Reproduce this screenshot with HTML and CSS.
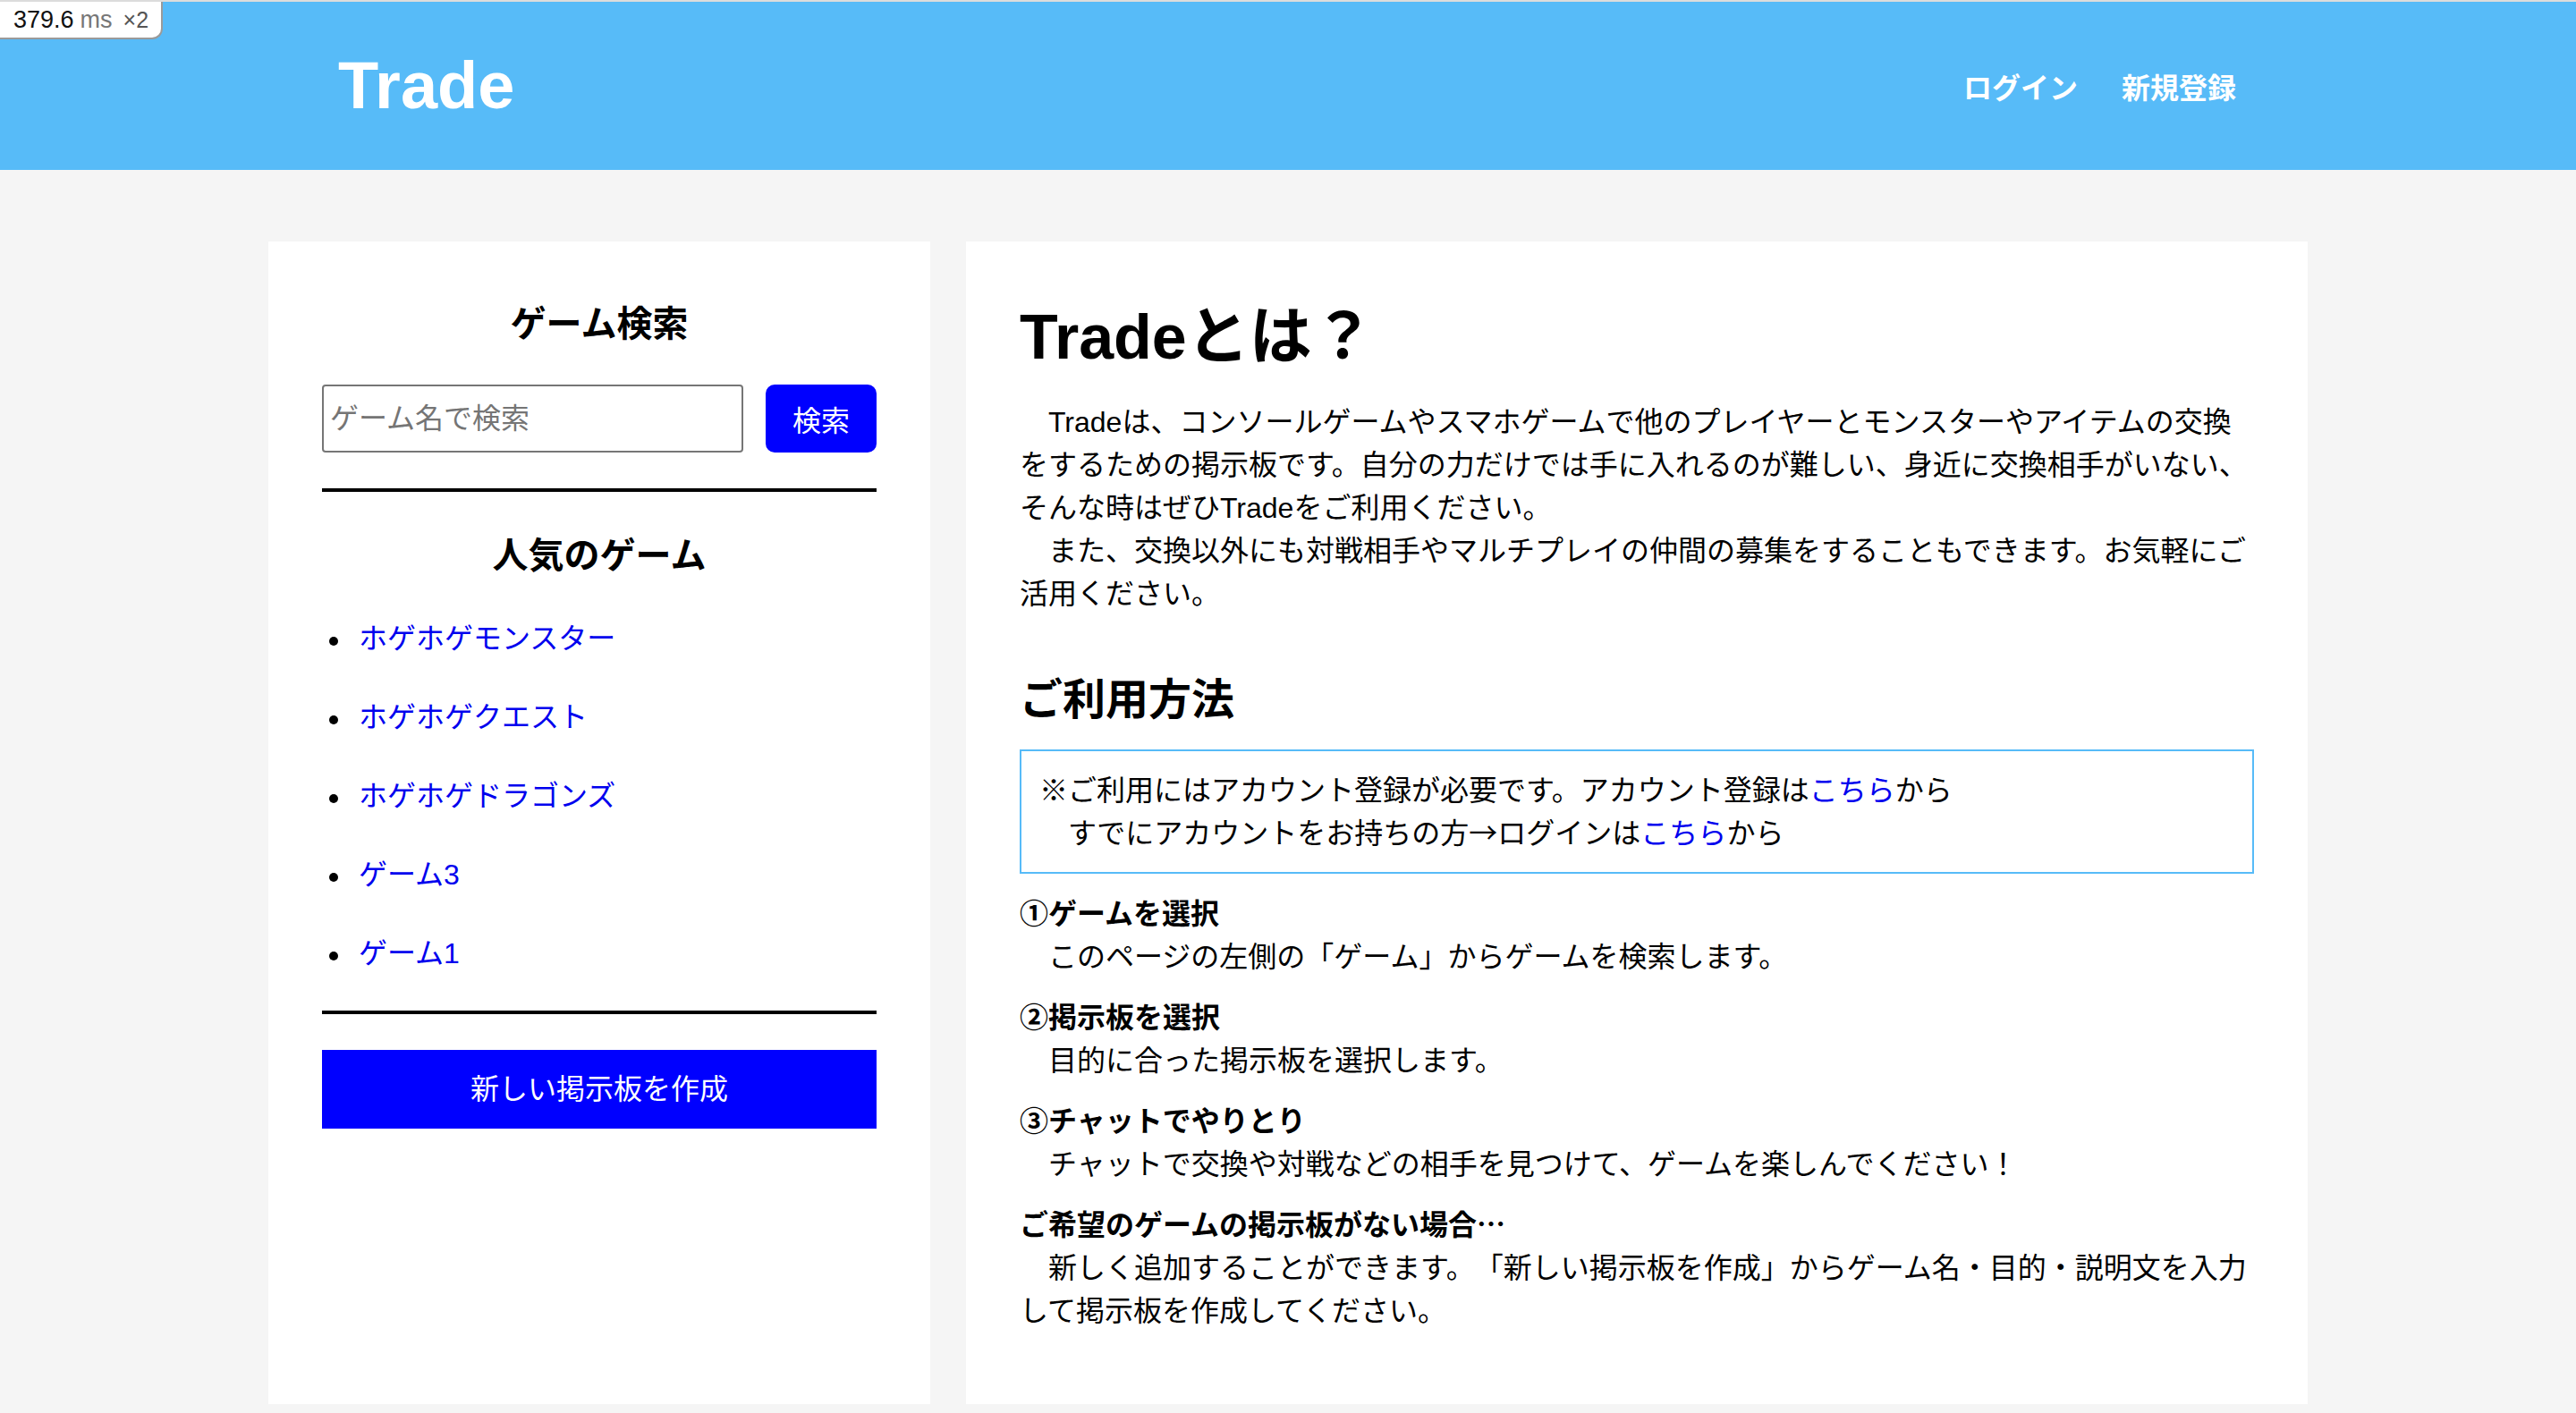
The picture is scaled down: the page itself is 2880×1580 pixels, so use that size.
FILE: index.html
```html
<!DOCTYPE html>
<html lang="ja">
<head>
<meta charset="utf-8">
<title>Trade</title>
<link rel="stylesheet" href="styles.css">
</head>
<body>
<div class="perf-badge"><span class="pb-num">379.6</span><span class="pb-unit">ms</span><span class="pb-mult">×2</span></div>
<header class="site-header">
  <div class="header-inner">
    <a class="logo" href="#">Trade</a>
    <nav class="header-nav">
      <a href="#">ログイン</a>
      <a href="#">新規登録</a>
    </nav>
  </div>
</header>
<main class="layout">
  <aside class="card sidebar">
    <h2 class="side-title">ゲーム検索</h2>
    <form class="search-row" onsubmit="return false;">
      <input class="search-input" type="text" placeholder="ゲーム名で検索">
      <button class="search-btn" type="submit">検索</button>
    </form>
    <hr class="divider">
    <h2 class="side-title popular-title">人気のゲーム</h2>
    <ul class="game-list">
      <li><a href="#">ホゲホゲモンスター</a></li>
      <li><a href="#">ホゲホゲクエスト</a></li>
      <li><a href="#">ホゲホゲドラゴンズ</a></li>
      <li><a href="#">ゲーム3</a></li>
      <li><a href="#">ゲーム1</a></li>
    </ul>
    <hr class="divider divider-tight">
    <a class="create-btn" href="#">新しい掲示板を作成</a>
  </aside>
  <section class="card content">
    <h1 class="page-title">Tradeとは？</h1>
    <p class="intro">　Tradeは、コンソールゲームやスマホゲームで他のプレイヤーとモンスターやアイテムの交換をするための掲示板です。自分の力だけでは手に入れるのが難しい、身近に交換相手がいない、そんな時はぜひTradeをご利用ください。<br>　また、交換以外にも対戦相手やマルチプレイの仲間の募集をすることもできます。お気軽にご活用ください。</p>
    <h2 class="section-title">ご利用方法</h2>
    <div class="notice">
      ※ご利用にはアカウント登録が必要です。アカウント登録は<a href="#">こちら</a>から<br>
      　すでにアカウントをお持ちの方<span class="jp">→</span>ログインは<a href="#">こちら</a>から
    </div>
    <div class="step step-first">
      <p class="step-title">①ゲームを選択</p>
      <p class="step-desc">　このページの左側の「ゲーム」からゲームを検索します。</p>
    </div>
    <div class="step">
      <p class="step-title">②掲示板を選択</p>
      <p class="step-desc">　目的に合った掲示板を選択します。</p>
    </div>
    <div class="step">
      <p class="step-title">③チャットでやりとり</p>
      <p class="step-desc">　チャットで交換や対戦などの相手を見つけて、ゲームを楽しんでください！</p>
    </div>
    <div class="step">
      <p class="step-title">ご希望のゲームの掲示板がない場合<span class="jp">…</span></p>
      <p class="step-desc">　新しく追加することができます。「新しい掲示板を作成」からゲーム名・目的・説明文を入力して掲示板を作成してください。</p>
    </div>
  </section>
</main>
</body>
</html>
```

FILE: styles.css
```css
html, body {
  margin: 0;
  padding: 0;
}

body {
  background: #f5f5f5;
  font-family: "Liberation Sans", "Noto Sans CJK JP", sans-serif;
  font-size: 32px;
  line-height: 48px;
  color: #000;
  text-spacing-trim: space-all;
}

.jp {
  font-family: "Noto Sans CJK JP", sans-serif;
  line-height: 1;
}

/* perf badge overlay */
.perf-badge {
  position: absolute;
  top: 2px;
  left: 0;
  width: 182px;
  height: 42px;
  box-sizing: border-box;
  background: #fff;
  border-right: 2px solid #9a9a9a;
  border-bottom: 2px solid #9a9a9a;
  border-bottom-right-radius: 12px;
  display: flex;
  align-items: center;
  padding-left: 15px;
  font-family: "Liberation Sans", sans-serif;
  font-size: 27px;
  line-height: 1;
  z-index: 10;
}

.pb-num {
  color: #111;
}

.pb-unit {
  color: #777;
  margin-left: 7px;
}

.pb-mult {
  color: #555;
  margin-left: 12px;
  font-size: 25px;
}

/* header */
.site-header {
  background: #57bbf8;
  border-top: 2px solid #dcdcdc;
  height: 188px;
}

.header-inner {
  width: 2124px;
  height: 100%;
  margin: 0 auto;
  display: flex;
  align-items: center;
  justify-content: space-between;
}

.logo {
  color: #fff;
  text-decoration: none;
  font-size: 74px;
  font-weight: 700;
  line-height: 1;
}

.header-nav {
  display: flex;
  gap: 49px;
  padding-right: 2px;
}

.header-nav a {
  color: #fff;
  text-decoration: none;
  font-family: "Noto Sans CJK JP", sans-serif;
  font-weight: 700;
  font-size: 32px;
  line-height: 48px;
}

/* layout */
.layout {
  display: flex;
  gap: 40px;
  width: 2280px;
  margin: 80px auto 0;
  align-items: stretch;
}

.card {
  background: #fff;
  min-height: 1300px;
  box-sizing: border-box;
}

/* sidebar */
.sidebar {
  width: 740px;
  flex: none;
  padding: 62px 60px 0;
}

.side-title {
  margin: 0;
  font-size: 40px;
  line-height: 60px;
  font-weight: 700;
  text-align: center;
}

.search-row {
  display: flex;
  gap: 25px;
  margin: 38px 0 0;
}

.search-input {
  flex: 1;
  min-width: 0;
  height: 76px;
  box-sizing: border-box;
  border: 2px solid #767676;
  border-radius: 4px;
  padding: 0 7px;
  font-family: "Liberation Sans", "Noto Sans CJK JP", sans-serif;
  font-size: 32px;
  color: #000;
  background: #fff;
  outline: none;
}

.search-input::placeholder {
  color: #757575;
}

.search-btn {
  width: 124px;
  height: 76px;
  flex: none;
  border: none;
  border-radius: 10px;
  background: #0000ff;
  color: #fff;
  padding: 0;
  font-family: "Noto Sans CJK JP", sans-serif;
  font-size: 32px;
  line-height: 1;
}

.divider {
  margin: 40px 0 0;
  border: none;
  height: 4px;
  background: #000;
}

.divider-tight {
  margin-top: 0;
}

.popular-title {
  margin-top: 41px;
}

.game-list {
  list-style: none;
  margin: 39px 0 0;
  padding: 0;
}

.game-list li {
  display: flex;
  align-items: center;
  height: 48px;
  margin-bottom: 40px;
}

.game-list li::before {
  content: "";
  flex: none;
  width: 10px;
  height: 10px;
  border-radius: 50%;
  background: #000;
  margin: 6px 23px 0 8px;
}

.game-list a {
  color: #0000ee;
  text-decoration: none;
}

.create-btn {
  display: flex;
  align-items: center;
  justify-content: center;
  height: 88px;
  margin-top: 40px;
  background: #0000ff;
  color: #fff;
  text-decoration: none;
}

/* main content */
.content {
  flex: 1;
  padding: 55px 60px 0;
}

.page-title {
  margin: 0;
  font-size: 70px;
  line-height: 105px;
  font-weight: 700;
}

.intro {
  margin: 18px 0 0;
}

.section-title {
  margin: 59px 0 0;
  font-size: 48px;
  line-height: 72px;
  font-weight: 700;
}

.notice {
  margin-top: 19px;
  border: 2px solid #57bbf8;
  padding: 20px 20px 19px;
}

.notice a {
  color: #0000ee;
  text-decoration: none;
}

.step {
  margin-top: 20px;
}

.step-first {
  margin-top: 21px;
}

.step-title {
  margin: 0;
  font-weight: 700;
}

.step-desc {
  margin: 0;
}
```
